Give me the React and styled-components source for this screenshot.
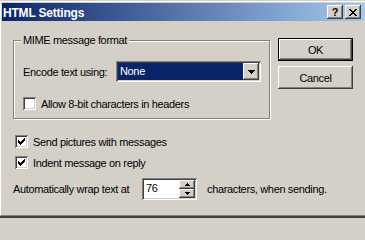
import React from 'react';
import styled, { createGlobalStyle, css } from 'styled-components';

const face = '#d4d0c8';
const shadow = '#808080';
const darkShadow = '#404040';
const highlight = '#ffffff';

const GlobalStyle = createGlobalStyle`
  html, body {
    margin: 0;
    padding: 0;
    background: ${face};
  }
  body {
    font-family: "Liberation Sans", Arial, sans-serif;
    font-size: 11px;
    letter-spacing: -0.35px;
    color: #000;
    overflow: hidden;
  }
`;

const raised = css`
  box-shadow:
    inset -1px -1px 0 ${darkShadow},
    inset 1px 1px 0 ${highlight},
    inset -2px -2px 0 ${shadow},
    inset 2px 2px 0 ${face};
`;

const sunken = css`
  box-shadow:
    inset 1px 1px 0 ${shadow},
    inset -1px -1px 0 ${highlight},
    inset 2px 2px 0 ${darkShadow},
    inset -2px -2px 0 ${face};
`;

const Window = styled.div`
  width: 365px;
  height: 218px;
  box-sizing: border-box;
  background: ${face};
  padding-top: 1px;
  border-bottom: 2px solid ${darkShadow};
  display: flex;
  flex-direction: column;
`;

const Frame = styled.div`
  flex: 1;
  min-height: 0;
  box-sizing: border-box;
  border-top: 1px solid ${highlight};
  border-left: 1px solid ${highlight};
  border-bottom: 1px solid ${shadow};
  padding: 1px 0 0 1px;
  display: flex;
  flex-direction: column;
`;

const TitleBar = styled.div`
  height: 18px;
  flex: none;
  display: flex;
  align-items: center;
  padding: 0 4px 0 1px;
  background: linear-gradient(to right, #0a246a, #a6caf0);
`;

const Title = styled.span`
  flex: 1;
  color: #fff;
  font-weight: bold;
  font-size: 12px;
  letter-spacing: -0.2px;
  margin-top: 1px;
`;

const CaptionButton = styled.div`
  width: 16px;
  height: 14px;
  margin-left: ${({ $gap }) => $gap || 0}px;
  background: ${face};
  ${raised};
  display: flex;
  align-items: center;
  justify-content: center;
  font-weight: bold;
  font-size: 11px;
  letter-spacing: 0;
  line-height: 14px;
`;

const Body = styled.div`
  flex: 1;
  padding: 0 0 0 11px;
  display: flex;
  flex-direction: column;
`;

const TopRow = styled.div`
  display: flex;
  align-items: flex-start;
`;

const GroupBox = styled.div`
  position: relative;
  margin-top: 19px;
  width: 257px;
  height: 79px;
  border: 1px solid ${shadow};
  box-shadow: inset 1px 1px 0 ${highlight}, 1px 1px 0 ${highlight};
  padding: 20px 8px 0 9px;
  box-sizing: border-box;
  display: flex;
  flex-direction: column;
`;

const Legend = styled.span`
  position: absolute;
  top: -7px;
  left: 7px;
  padding: 0 2px;
  background: ${face};
  line-height: 13px;
`;

const FieldRow = styled.div`
  display: flex;
  align-items: center;
  justify-content: space-between;
  height: 21px;
`;

const Combo = styled.div`
  width: 145px;
  height: 21px;
  box-sizing: border-box;
  padding: 2px;
  background: #fff;
  ${sunken};
  display: flex;
`;

const ComboValue = styled.div`
  flex: 1;
  background: #0a246a;
  color: #fff;
  padding-left: 2px;
  line-height: 17px;
`;

const DropButton = styled.div`
  width: 16px;
  height: 17px;
  background: ${face};
  ${raised};
  display: flex;
  align-items: center;
  justify-content: center;
`;

const CheckRow = styled.label`
  display: flex;
  align-items: center;
  height: 13px;
  margin-top: ${({ $top }) => $top || 0}px;
  margin-left: ${({ $left }) => $left || 0}px;
`;

const CheckBox = styled.span`
  width: 13px;
  height: 13px;
  flex: none;
  box-sizing: border-box;
  background: #fff;
  ${sunken};
  display: flex;
  align-items: center;
  justify-content: center;
  margin-right: 5px;
`;

const ButtonColumn = styled.div`
  margin: 17px 0 0 8px;
  display: flex;
  flex-direction: column;
  gap: 5px;
`;

const PushButton = styled.div`
  width: 75px;
  height: 23px;
  box-sizing: border-box;
  background: ${face};
  display: flex;
  align-items: center;
  justify-content: center;
  ${raised};
  ${({ $default }) =>
    $default &&
    css`
      box-shadow:
        inset 0 0 0 1px #000,
        inset -2px -2px 0 ${darkShadow},
        inset 2px 2px 0 ${highlight},
        inset -3px -3px 0 ${shadow},
        inset 3px 3px 0 ${face};
    `}
`;

const WrapRow = styled.div`
  display: flex;
  align-items: center;
  margin-top: 9px;
  height: 22px;
`;

const WrapLabel = styled.span`
  width: 129px;
  flex: none;
`;

const SpinEdit = styled.div`
  width: 55px;
  height: 22px;
  box-sizing: border-box;
  padding: 2px;
  background: #fff;
  ${sunken};
  display: flex;
`;

const SpinValue = styled.span`
  flex: 1;
  padding-left: 2px;
  line-height: 16px;
`;

const SpinButtons = styled.div`
  width: 16px;
  display: flex;
  flex-direction: column;
`;

const SpinButton = styled.div`
  flex: 1;
  background: ${face};
  ${raised};
  display: flex;
  align-items: center;
  justify-content: center;
`;

const Trailing = styled.span`
  margin-left: 10px;
`;

const Check = () => (
  <svg width="7" height="7" viewBox="0 0 7 7" shapeRendering="crispEdges">
    <path
      fill="#000"
      d="M6 0h1v3h-1zM5 1h1v3h-1zM4 2h1v3h-1zM3 3h1v3h-1zM2 4h1v3h-1zM1 3h1v3h-1zM0 2h1v3h-1z"
    />
  </svg>
);

const Arrow = ({ up, size = 7 }) => {
  const h = Math.ceil(size / 2);
  const points = up
    ? `0,${h} ${size},${h} ${size / 2},0`
    : `0,0 ${size},0 ${size / 2},${h}`;
  return (
    <svg width={size} height={h} viewBox={`0 0 ${size} ${h}`} shapeRendering="crispEdges">
      <polygon points={points} fill="#000" />
    </svg>
  );
};

const CloseGlyph = () => (
  <svg width="8" height="7" viewBox="0 0 8 7" shapeRendering="crispEdges">
    <path
      fill="#000"
      d="M0 0h2v1h-2zM6 0h2v1h-2zM1 1h2v1h-2zM5 1h2v1h-2zM2 2h4v1h-4zM3 3h2v1h-2zM2 4h4v1h-4zM1 5h2v1h-2zM5 5h2v1h-2zM0 6h2v1h-2zM6 6h2v1h-2z"
    />
  </svg>
);

export default function App() {
  return (
    <>
      <GlobalStyle />
      <Window>
        <Frame>
          <TitleBar>
            <Title>HTML Settings</Title>
            <CaptionButton>?</CaptionButton>
            <CaptionButton $gap={2}>
              <CloseGlyph />
            </CaptionButton>
          </TitleBar>
          <Body>
            <TopRow>
              <GroupBox>
                <Legend>MIME message format</Legend>
                <FieldRow>
                  <span>Encode text using:</span>
                  <Combo>
                    <ComboValue>None</ComboValue>
                    <DropButton>
                      <Arrow />
                    </DropButton>
                  </Combo>
                </FieldRow>
                <CheckRow $top={15}>
                  <CheckBox />
                  Allow 8-bit characters in headers
                </CheckRow>
              </GroupBox>
              <ButtonColumn>
                <PushButton $default>OK</PushButton>
                <PushButton>Cancel</PushButton>
              </ButtonColumn>
            </TopRow>
            <CheckRow $top={16} $left={2}>
              <CheckBox>
                <Check />
              </CheckBox>
              Send pictures with messages
            </CheckRow>
            <CheckRow $top={8} $left={2}>
              <CheckBox>
                <Check />
              </CheckBox>
              Indent message on reply
            </CheckRow>
            <WrapRow>
              <WrapLabel>Automatically wrap text at</WrapLabel>
              <SpinEdit>
                <SpinValue>76</SpinValue>
                <SpinButtons>
                  <SpinButton>
                    <Arrow up size={5} />
                  </SpinButton>
                  <SpinButton>
                    <Arrow size={5} />
                  </SpinButton>
                </SpinButtons>
              </SpinEdit>
              <Trailing>characters, when sending.</Trailing>
            </WrapRow>
          </Body>
        </Frame>
      </Window>
    </>
  );
}
